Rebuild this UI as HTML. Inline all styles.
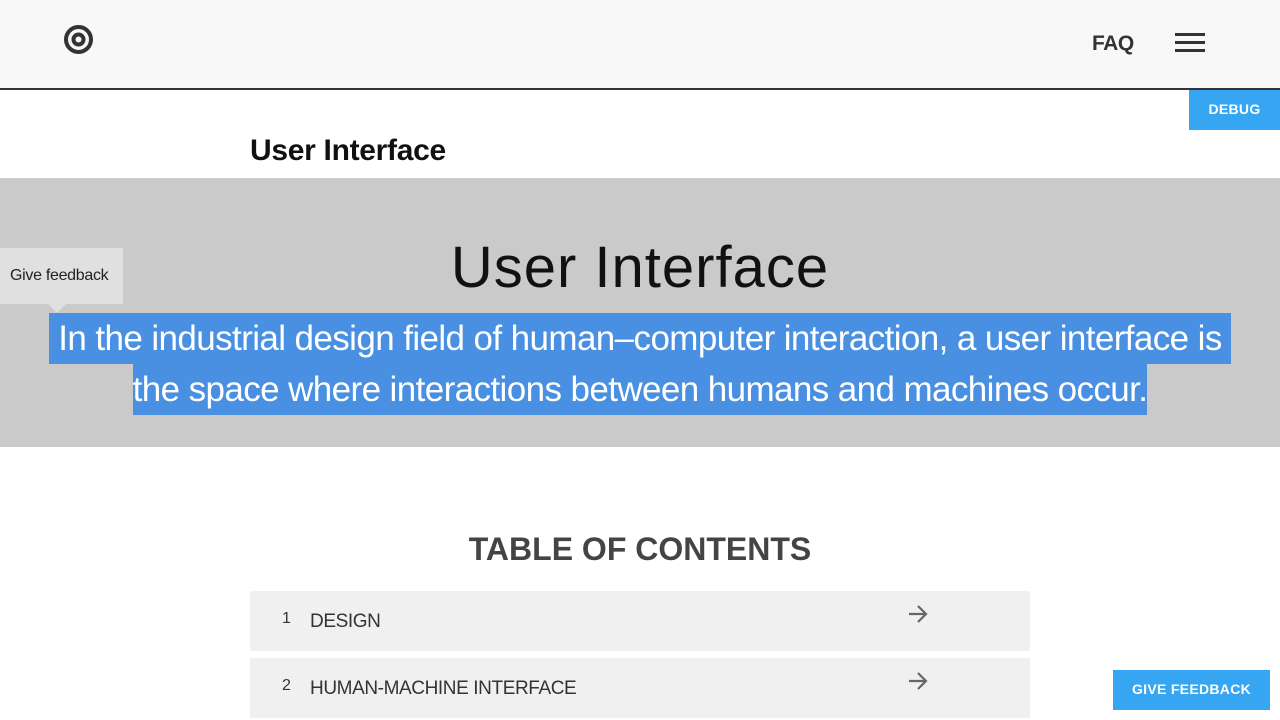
<!DOCTYPE html>
<html><head><style>
*{margin:0;padding:0;box-sizing:border-box}
body{width:1280px;height:720px;overflow:hidden;background:#fff;font-family:"Liberation Sans",sans-serif;position:relative}
.hdr{position:absolute;left:0;top:0;width:1280px;height:90px;background:#f8f8f8;border-bottom:2px solid #333}
.faq{position:absolute;left:1092px;top:32px;font-size:21px;font-weight:bold;color:#333;letter-spacing:-.5px}
.bar{position:absolute;left:1175px;width:30px;height:3px;background:#333}
.debug{position:absolute;left:1189px;top:90px;width:91px;height:40px;background:#36a6f2;color:#fff;font-size:14px;font-weight:bold;text-align:center;line-height:38px;letter-spacing:.3px}
.t1{position:absolute;left:250px;top:134px;font-size:30px;font-weight:bold;color:#111;letter-spacing:-.3px}
.hero{position:absolute;left:0;top:178px;width:1280px;height:269px;background:#cacaca}
.h1{position:absolute;left:0;width:1280px;top:56px;text-align:center;font-size:58px;color:#111;letter-spacing:1px}
.desc{position:absolute;left:0;width:1280px;top:135px;text-align:center;font-size:35px;line-height:51px;color:#fff;letter-spacing:-.6px}
.desc span{background:#4a90e2;padding:6px 0 6px}
.fb{position:absolute;left:0;top:248px;width:123px;height:56px;background:#e0e0e0;font-size:16px;color:#222;line-height:56px;padding-left:10px;letter-spacing:-.3px}
.fb:after{content:"";position:absolute;left:48px;top:56px;border:9px solid transparent;border-top:9px solid #e0e0e0;border-bottom:0}
.toc{position:absolute;left:0;width:1280px;top:531px;text-align:center;font-size:32px;font-weight:bold;color:#444}
.row{position:absolute;left:250px;width:780px;height:60px;background:#f0f0f0;border-radius:2px;color:#333}
.row .n{position:absolute;left:32px;top:19px;font-size:16px}
.row .l{position:absolute;left:60px;top:20px;font-size:19px;letter-spacing:-.4px}
.row svg{position:absolute;left:657px;top:12px}
.gfb{position:absolute;left:1113px;top:670px;width:157px;height:40px;background:#36a6f2;color:#fff;font-size:14px;font-weight:bold;text-align:center;line-height:38px;letter-spacing:.3px}
</style></head><body>
<div class="hdr">
<svg style="position:absolute;left:63px;top:24px" width="31" height="31" viewBox="0 0 31 31"><circle cx="15.5" cy="15.5" r="12.5" fill="none" stroke="#333" stroke-width="4"/><circle cx="15.5" cy="15.5" r="5" fill="none" stroke="#333" stroke-width="4"/></svg>
<div class="faq">FAQ</div>
<div class="bar" style="top:33px"></div><div class="bar" style="top:41px"></div><div class="bar" style="top:49px"></div>
</div>
<div class="debug">DEBUG</div>
<div class="t1">User Interface</div>
<div class="hero">
<div class="h1">User Interface</div>
<div class="desc"><span>&nbsp;In the industrial design field of human–computer interaction, a user interface is&nbsp;</span><br><span>the space where interactions between humans and machines occur.</span></div>
</div>
<div class="fb">Give feedback</div>
<div class="toc">TABLE OF CONTENTS</div>
<div class="row" style="top:591px"><span class="n">1</span><span class="l">DESIGN</span><svg width="22" height="22" viewBox="0 0 22 22"><path d="M2 11H19M11 3l8 8-8 8" fill="none" stroke="#666" stroke-width="2.2"/></svg></div>
<div class="row" style="top:658px"><span class="n">2</span><span class="l">HUMAN-MACHINE INTERFACE</span><svg width="22" height="22" viewBox="0 0 22 22"><path d="M2 11H19M11 3l8 8-8 8" fill="none" stroke="#666" stroke-width="2.2"/></svg></div>
<div class="gfb">GIVE FEEDBACK</div>
</body></html>
